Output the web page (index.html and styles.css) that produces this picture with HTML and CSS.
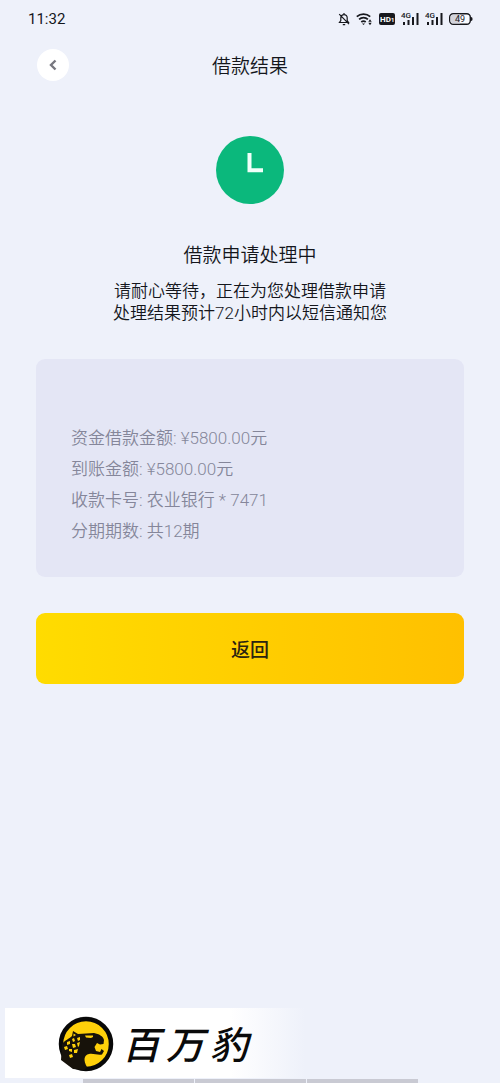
FILE: index.html
```
<!DOCTYPE html>
<html lang="zh-CN">
<head>
  <meta charset="UTF-8">
  <meta name="viewport" content="width=device-width, initial-scale=1.0">
  <title>借款结果</title>
  <link rel="stylesheet" href="styles.css">
</head>
<body>
  <div class="status-bar">
    <span class="time">11:32</span>
    <div class="status-icons">
      <!-- muted bell -->
      <svg width="12" height="14" viewBox="0 0 12 14" fill="none" stroke="#17181d" stroke-width="1.2">
        <path d="M1.5 10.5h9L9.2 8.6V5.8A3.2 3.2 0 0 0 6 2.6 3.2 3.2 0 0 0 2.8 5.8v2.8zM6 1v1.5M4.8 12.6h2.4M1.2 2.2l9.8 10"/>
      </svg>
      <!-- wifi -->
      <svg width="17" height="14" viewBox="0 0 17 14" fill="none" stroke="#17181d" stroke-width="1.7">
        <path d="M.8 4.700a9.8 9.8 0 0 1 13.4 0M3.1 7.4a6.3 6.3 0 0 1 8.8 0M5.3 10a3.3 3.3 0 0 1 4.4 0"/>
        <path d="M6 11.4h3L7.500 13z" fill="#17181d" stroke="none"/>
        <path d="M12.300 9.700l1.700-2.500 1.700 2.500zM12.300 10.700l1.700 2.500 1.700-2.500z" fill="#17181d" stroke="none"/>
      </svg>
      <svg width="16" height="14" viewBox="0 0 16 14">
        <rect x="0" y="1" width="16" height="12" rx="2" fill="#17181d"/>
        <text class="hd" x="1" y="10">HD</text>
        <text class="hd-sub" x="12" y="10">1</text>
      </svg>
      <svg width="18" height="14" viewBox="0 0 18 14" fill="#17181d">
        <text class="net" x="0" y="6">4G</text>
        <path d="M2 10h2v3H2zM6.500 8h2v5h-2zM11 5h2v8h-2zM15.500 1h2v12h-2z"/>
      </svg>
      <svg width="18" height="14" viewBox="0 0 18 14" fill="#17181d">
        <text class="net" x="0" y="6">4G</text>
        <path d="M2 10h2v3H2zM6.500 8h2v5h-2zM11 5h2v8h-2zM15.500 1h2v12h-2z"/>
      </svg>
      <svg width="24" height="14" viewBox="0 0 24 14">
        <rect x="0.700" y="1.700" width="20.600" height="10.600" rx="3.500" fill="#fafbfe" stroke="#17181d" stroke-width="1.400"/>
        <path d="M4.500 2.500H11v9H4.500a3 3 0 0 1-3-3v-3a3 3 0 0 1 3-3z" fill="#d3d4dc"/>
        <path d="M22 5q1.600 0 1.600 2T22 9z" fill="#17181d"/>
        <text class="battery" x="6" y="10">49</text>
      </svg>
    </div>
  </div>

  <header class="header">
    <button type="button" class="back-btn" aria-label="返回上一页">
      <svg width="10" height="14" viewBox="0 0 10 14" fill="none" stroke="#77777f" stroke-width="2.400">
        <path d="M7.500 2.500L3 7l4.500 4.500"/>
      </svg>
    </button>
    <h1 class="title">借款结果</h1>
  </header>

  <main class="content">
    <svg class="clock" width="68" height="68" viewBox="0 0 68 68">
      <circle cx="34" cy="34" r="34" fill="#0bb87c"/>
      <path d="M33.500 17v17.300H47" fill="none" stroke="#f1fff9" stroke-width="4"/>
    </svg>
    <h2 class="result">借款申请处理中</h2>
    <p class="message">请耐心等待，正在为您处理借款申请<br>处理结果预计72小时内以短信通知您</p>

    <ul class="card">
      <li>资金借款金额: ¥5800.00元</li>
      <li>到账金额: ¥5800.00元</li>
      <li>收款卡号: 农业银行 * 7471</li>
      <li>分期期数: 共12期</li>
    </ul>

    <button type="button" class="return-btn">返回</button>
  </main>

  <footer class="footer">
    <div class="brand">
      <!-- panther head -->
      <svg width="56" height="56" viewBox="0 0 56 56">
        <circle cx="28" cy="28" r="25" fill="#ffd10a" stroke="#080808" stroke-width="4.500"/>
        <path d="M4 28C7 24 11 23 14 20L15 15 20 18 36 17C41 18 45 20 46 24L45.500 28 42 28.500 39 27 36.500 31 38 35 42 36 43.500 33 46 35 44 38.500C40 39.500 35 37 31 38 26 39 25 44 29 51L26 54 15 53 3 44z" fill="#17120a"/>
        <path d="M27 19.500l8 0 0 1.500-2 1-5-.5z" fill="#ffd10a"/>
        <g fill="#ffd10a">
          <path d="M15.500 17.500l2.500 1.500-2.500 1.500zM19 22l3-1 0 3-2 1zM14 23l2-1 1 3-2 1zM9 26l3-1 0 3-3 1zM14 28l3 0 1 3-3 1zM19 27l3-1-1 4-1 1zM6 31l3-1 1 3-3 1zM11 33l3 0 0 3-3-1zM16 34l4-1-1 4-3 0zM11 39l3-1 1 3-3 1z"/>
        </g>
      </svg>
      <span class="brand-name"><span>百</span><span>万</span><span>豹</span></span>
    </div>
    <div class="home-bar">
      <span></span>
      <span></span>
      <span></span>
    </div>
  </footer>
</body>
</html>
```
FILE: styles.css
```
* {
  box-sizing: border-box;
}

body {
  margin: 0;
  min-height: 100vh;
  display: flex;
  flex-direction: column;
  background-color: #eef1fa;
  color: #14161c;
  font-family: Roboto, "Noto Sans CJK SC", sans-serif;
}

h1, h2, p, ul {
  margin: 0;
  padding: 0;
}

.status-bar {
  display: flex;
  align-items: center;
  justify-content: space-between;
  height: 37px;
  padding: 0 27px 0 28px;
}

.time {
  font-size: 15px;
}

.status-icons {
  display: flex;
  align-items: center;
  gap: 6px;
}

.hd {
  font-size: 8px;
  font-weight: 700;
  fill: #fff;
}

.hd-sub {
  font-size: 6px;
  font-weight: 700;
  fill: #fff;
}

.net {
  font-size: 8px;
  font-weight: 500;
}

.battery {
  font-size: 9px;
  fill: #17181d;
}

.header {
  display: grid;
  grid-template-columns: 32px 1fr 32px;
  align-items: center;
  padding: 12px 37px 0;
}

.back-btn {
  display: flex;
  align-items: center;
  justify-content: center;
  width: 32px;
  height: 32px;
  padding: 0;
  border: none;
  border-radius: 50%;
  background-color: #fff;
  cursor: pointer;
}

.title {
  padding-top: 4px;
  font-size: 19px;
  font-weight: 350;
  line-height: 28px;
  text-align: center;
}

.content {
  display: flex;
  flex-direction: column;
  align-items: center;
  padding: 55px 36px 36px;
}

.result {
  margin-top: 38px;
  font-size: 19px;
  font-weight: 350;
  line-height: 28px;
}

.message {
  margin-top: 10px;
  font-size: 17px;
  font-weight: 350;
  line-height: 22px;
  text-align: center;
}

.card {
  width: 100%;
  margin-top: 35px;
  padding: 64px 35px 30px;
  border-radius: 9px;
  background-color: #e4e6f5;
  color: #85869a;
  font-size: 17px;
  font-weight: 350;
  line-height: 31px;
  list-style: none;
}

.return-btn {
  width: 100%;
  height: 71px;
  margin-top: 36px;
  border: none;
  border-radius: 9px;
  background: linear-gradient(to right, #ffdc00, #ffc000);
  color: #2b2410;
  font-family: inherit;
  font-size: 19px;
  font-weight: 500;
  cursor: pointer;
}

.footer {
  margin-top: auto;
}

.brand {
  display: flex;
  align-items: center;
  gap: 8px;
  width: 60%;
  height: 70px;
  margin-left: 5px;
  padding: 2px 0 0 53px;
  background: linear-gradient(to right, #fff 75%, #eef1fa);
}

.brand-name {
  display: flex;
  gap: 6px;
  padding-top: 4px;
  color: #0a0a0a;
  font-size: 38px;
  font-style: italic;
  font-weight: 500;
  line-height: 52px;
}

.home-bar {
  display: grid;
  grid-template-columns: repeat(3, 1fr);
  gap: 1px;
  width: 67%;
  margin: 1px auto 0;
}

.home-bar span {
  height: 4px;
  background-color: #c9cad3;
}
```
